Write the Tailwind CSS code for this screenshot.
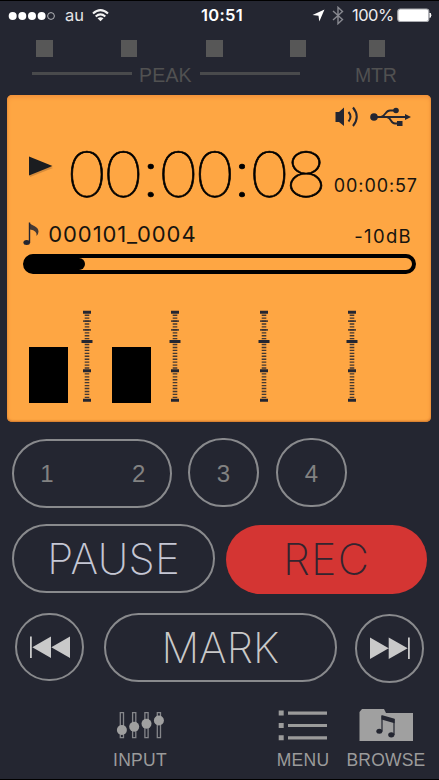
<!DOCTYPE html>
<html lang="en">
<head>
<meta charset="utf-8">
<title>Recorder</title>
<script src="https://cdn.jsdelivr.net/npm/@tailwindcss/browser@4"></script>
</head>
<body class="bg-[#242631]">
<main class="w-[439px] h-[780px] overflow-hidden bg-[#242631] border-t border-b-[1.5px] border-black flex flex-col font-['Inter','Liberation_Sans',sans-serif] whitespace-nowrap">

  <header class="h-[29px] shrink-0 flex items-center text-white leading-[29px]">
    <svg class="ml-[8px] w-[48px] h-[10px]" viewBox="0 0 48 10"><g fill="#fff"><circle cx="4.7" cy="5" r="4"/><circle cx="14.3" cy="5" r="4"/><circle cx="24" cy="5" r="4"/><circle cx="33.6" cy="5" r="4"/></g><circle cx="43" cy="5" r="3.4" fill="none" stroke="#b5b6ba" stroke-width="1"/></svg>
    <span class="ml-[9px] w-[27px] text-[16.5px] text-[#e4e4e6]">au</span>
    <svg class="w-[18px] h-[13px]" viewBox="0 0 18 13" fill="none" stroke="#f2f2f2" stroke-width="2.1"><path d="M1 4.6Q8.500-2.300 16 4.600"/><path d="M3.700 7.500Q8.500 3.200 13.300 7.500"/><path d="M8.500 12.300L5.500 9.300Q8.500 7 11.500 9.300Z" fill="#f2f2f2" stroke="none"/></svg>
    <span class="ml-[91px] w-[44px] text-[16.500px] font-semibold tracking-[0.3px]">10:51</span>
    <svg class="ml-[66.500px] w-[13px] h-[13px]" viewBox="0 0 13 13"><path d="M12.500.5L7.300 12.500L6.500 6.700L.5 6Z" fill="#fff"/></svg>
    <svg class="ml-[7px] w-[12px] h-[19px]" viewBox="0 0 12 19" fill="none" stroke="#888990" stroke-width="1.400"><path d="M1 5L10.500 13.500L6 17.700V1.300L10.500 5.500L1 14"/></svg>
    <span class="ml-[8.500px] w-[44.500px] text-[16.500px] tracking-[-0.5px] text-[#ececee]">100%</span>
    <svg class="w-[35px] h-[15px]" viewBox="0 0 35 15"><rect x=".8" y="1" width="31" height="12.500" rx="2.500" fill="#fff" stroke="#aaabb0" stroke-width="1.200"/><path d="M33 5Q35 7.200 33 9.500Z" fill="#fff" stroke="#fff"/></svg>
  </header>

  <section class="h-[65.3px] shrink-0 pt-[10px] text-[#515151]">
    <div class="flex h-[17px] pl-[36px]">
      <i class="size-[16.500px] bg-[#575757]"></i>
      <i class="ml-[68px] size-[16.500px] bg-[#575757]"></i>
      <i class="ml-[69px] size-[16.500px] bg-[#575757]"></i>
      <i class="ml-[67px] size-[16.500px] bg-[#575757]"></i>
      <i class="ml-[62.500px] size-[16.500px] bg-[#575757]"></i>
    </div>
    <div class="mt-[8px] h-[20px] flex items-center pl-[32px] leading-[20px] font-['Liberation_Sans',sans-serif] text-[19.500px]">
      <i class="w-[99.500px] h-[3px] bg-[#494a4c] -mt-[3px]"></i>
      <span class="ml-[7.500px] w-[60.500px] tracking-[0.2px]">PEAK</span>
      <i class="w-[100px] h-[3px] bg-[#494a4c] -mt-[3px]"></i>
      <span class="ml-[55.500px] tracking-[-0.2px]">MTR</span>
    </div>
  </section>

  <section class="ml-[7.300px] w-[423.500px] h-[326.300px] shrink-0 rounded-[5px] bg-[#fea643] shadow-[inset_0_2px_4px_#f0903a,inset_0_-1px_2px_#c9732a] text-[#17140f] flex flex-col">
    <div class="mt-[10px] h-[24px] flex items-center pl-[328px]">
      <svg class="w-[24px] h-[22px]" viewBox="0 0 24 22"><path d="M.5 6H4L9 1.500V20L4 16H.5Z" fill="#242631"/><path d="M13.500 6Q17.500 10.700 13.500 15.500M18 1.500Q25.500 10.700 18 20" fill="none" stroke="#242631" stroke-width="2"/></svg>
      <svg class="ml-[11px] w-[42px] h-[20px]" viewBox="0 0 42 20" fill="#242631"><circle cx="4" cy="10" r="3.800"/><path d="M35 7L41 10L35 13Z"/><circle cx="26" cy="3.500" r="2.800"/><rect x="27" y="14" width="5.500" height="5"/><path d="M4 10H36M11 10C16 9 15 3.500 20 3.500H26M17 10C22 11 20 16.500 25 16.500H28" fill="none" stroke="#242631" stroke-width="1.800"/></svg>
    </div>
    <div class="mt-[14px] h-[62px] flex items-center">
      <svg class="ml-[20px] -mt-[14px] w-[28px] h-[26px]" viewBox="0 0 28 26"><path d="M3 5L26 14L3 23Z" fill="#8a5a2c" opacity=".35"/><path d="M2 2.500L25.500 12L2 21.500Z" fill="#1b1d20"/></svg>
      <svg class="ml-[8.700px] -my-[10px] w-[263px] h-[82px] shrink-0 overflow-visible font-thin text-[62.500px]" viewBox="0 -10 263 82"><text transform="scale(1.13 1)" text-anchor="middle" x="20.35 52.5 76.7 101.15 133.45 157.5 181.7 214.2" y="53.6" fill="#000" stroke="#000" stroke-width=".6">00<tspan class="font-extralight">:</tspan>00<tspan class="font-extralight">:</tspan>08</text></svg>
      <span class="ml-[6.800px] mt-[24px] text-[18px] leading-[20px] tracking-[0.900px]">00:00:57</span>
    </div>
    <div class="mt-[17px] h-[24px] flex items-center">
      <svg class="ml-[16px] w-[17px] h-[24px]" viewBox="0 0 17 24"><ellipse cx="3.700" cy="20.500" rx="3.300" ry="2.500" fill="#242631"/><path d="M6.700 20.500V1C8.500 4 15.500 4 15.500 9.500Q15.500 12 13.500 14Q14.500 8.500 7 7.500" fill="#242631" opacity=".85"/><path d="M6.500 21V.5" stroke="#242631" stroke-width="1.400"/></svg>
      <span class="ml-[8px] w-[306px] text-[22px] leading-[24px] tracking-[0.900px]">000101_0004</span>
      <span class="mt-[4px] text-[18.500px] leading-[20px] tracking-[1.300px]">-10dB</span>
    </div>
    <div class="mt-[7.700px] ml-[16px] w-[392.500px] h-[20.500px] rounded-full border-[4px] border-black bg-[linear-gradient(90deg,#000_16px,transparent_16px)] bg-origin-border overflow-hidden">
      <div class="-ml-[10px] w-[68px] h-full bg-black rounded-r-full"></div>
    </div>
    <div class="mt-[36px] h-[93px] flex items-end pl-[21.700px]">
      <i class="w-[39px] h-[56px] bg-black"></i>
      <svg class="ml-[13.200px] w-[12px] h-[93px]" viewBox="0 0 12 93"><g id="scale" stroke="#242631"><path d="M6 2.200V91" stroke-width="4.600" stroke-dasharray="1.350 1.583" stroke-dashoffset=".6" opacity=".85"/><path d="M2 11.200H10M2 19.900H10" stroke-width="1.800" opacity=".75"/><path d="M2 2.200H10M.5 31.500H11.500M2 60.800H10M2 90.200H10" stroke-width="3"/></g></svg>
      <i class="ml-[19.200px] w-[39px] h-[56px] bg-black"></i>
      <svg class="ml-[18.100px] w-[12px] h-[93px]" viewBox="0 0 12 93"><use href="#scale"/></svg>
      <svg class="ml-[76.400px] w-[12px] h-[93px]" viewBox="0 0 12 93"><use href="#scale"/></svg>
      <svg class="ml-[76.400px] w-[12px] h-[93px]" viewBox="0 0 12 93"><use href="#scale"/></svg>
    </div>
  </section>

  <section class="mt-[16.400px] pl-[12.300px] h-[71px] shrink-0 flex items-start font-['Liberation_Sans',sans-serif] text-[24px] leading-[65px] text-[#828282]">
    <div class="mt-[1px] w-[160px] h-[69px] rounded-full border-2 border-[#898a8d] flex items-center justify-between pl-[26px] pr-[25px]"><span>1</span><span>2</span></div>
    <div class="ml-[16px] w-[70.500px] h-[69px] rounded-full border-2 border-[#898a8d] text-center pt-[1px]">3</div>
    <div class="ml-[17.500px] w-[70.500px] h-[69px] rounded-full border-2 border-[#898a8d] text-center pt-[1px]">4</div>
  </section>

  <section class="mt-[15.500px] pl-[12.300px] h-[70px] shrink-0 flex items-start font-extralight text-[42px] leading-[65px]">
    <div class="w-[203px] h-[69px] rounded-full border-2 border-[#898a8d] text-center text-[#c5c7d4] tracking-[0.400px]">PAUSE</div>
    <div class="mt-[1px] ml-[11px] w-[200.500px] h-[69px] rounded-full bg-[#d43533] text-center text-[#33242f] text-[43px] leading-[68px] tracking-[1.200px]">REC</div>
  </section>

  <section class="mt-[18.500px] pl-[15px] h-[71px] shrink-0 flex items-start">
    <div class="w-[69px] h-[68.500px] rounded-full border-2 border-[#898a8d] flex items-center justify-center">
      <svg class="w-[42px] h-[24px]" viewBox="0 0 42 24" fill="#c9c9c9"><path d="M1 1.500H2.800V23H1ZM22 1.500V23L3.300 12.200ZM41 1.500V23L22.300 12.200Z"/></svg>
    </div>
    <div class="ml-[20px] w-[232.500px] h-[69px] rounded-full border-2 border-[#898a8d] text-center font-extralight text-[42px] leading-[65px] text-[#c9c9c9]">MARK</div>
    <div class="mt-[1px] ml-[18.500px] w-[69px] h-[69px] rounded-full border-2 border-[#898a8d] flex items-center justify-center">
      <svg class="w-[42px] h-[24px]" viewBox="0 0 42 24" fill="#c9c9c9"><path d="M39 1.500H40.800V23H39ZM1 1.500V23L19.700 12.200ZM19.700 1.500V23L38.700 12.200Z"/></svg>
    </div>
  </section>

  <nav class="mt-[24px] shrink-0 flex pl-[100px] font-['Liberation_Sans',sans-serif] text-[17.500px] leading-[20px] text-[#9b9b9b]">
    <div class="w-[80px] flex flex-col items-center">
      <svg class="w-[50px] h-[34px]" viewBox="0 0 50 34"><g fill="none" stroke="#85868a" stroke-width="1.300"><path d="M5.300 4.700h3.200v25h-3.200zM17.600 4.700h3.200v25h-3.200zM29.900 4.700h3.200v25h-3.200zM42.300 4.700h3.200v25h-3.200z"/></g><g fill="#a0a0a0"><circle cx="6.900" cy="22" r="5"/><circle cx="19.200" cy="18.700" r="5"/><circle cx="31.500" cy="15.700" r="5"/><circle cx="43.900" cy="12.500" r="5"/></g></svg>
      <span class="mt-[8px] tracking-[0.300px]">INPUT</span>
    </div>
    <div class="ml-[83px] w-[80px] flex flex-col items-center">
      <svg class="w-[50px] h-[34px]" viewBox="0 0 50 34" fill="#9b9b9b"><path d="M.7 2.500h5v5h-5zM.7 15h5v5h-5zM.7 27.300h5v5h-5zM10 3.500h39v3.200H10zM10 15.900h39v3.200H10zM10 28.200h39v3.200H10z"/></svg>
      <span class="mt-[8px] tracking-[0.300px]">MENU</span>
    </div>
    <div class="ml-[3px] w-[80px] flex flex-col items-center">
      <svg class="w-[54px] h-[34px]" viewBox="0 0 54 34"><path d="M.5 33V4L3 1H25L27 5H54V33Z" fill="#a0a0a0"/><g fill="#242631"><path d="M22.500 7L35.600 10.700V15.300L22.500 11.500Z"/><ellipse cx="20.300" cy="23.300" rx="3" ry="2.500"/><ellipse cx="32.300" cy="26.800" rx="3.100" ry="2.600"/></g><path d="M23 8V23.500M35 11V27" stroke="#242631" stroke-width="1.200"/></svg>
      <span class="mt-[8px] tracking-[0.200px]">BROWSE</span>
    </div>
  </nav>
</main>
</body>
</html>
